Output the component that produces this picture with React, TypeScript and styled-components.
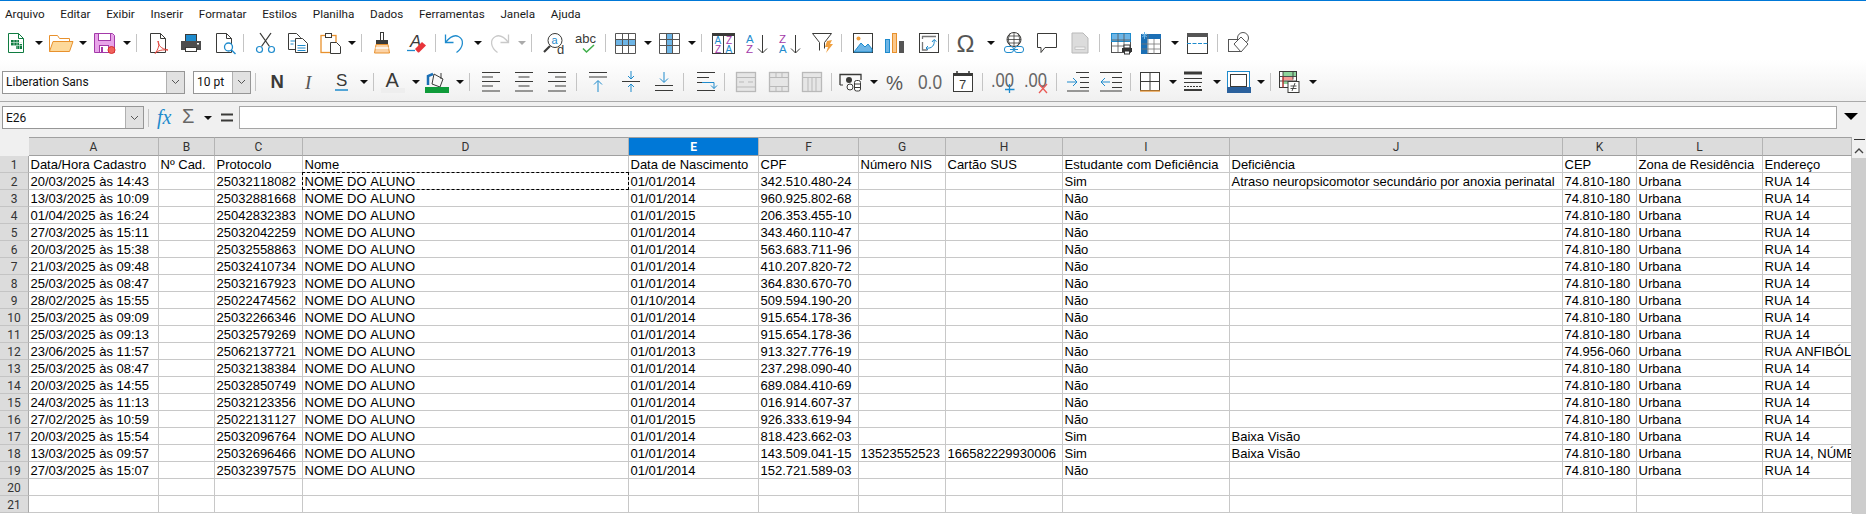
import React from "react";
import styled, { createGlobalStyle } from "styled-components";

const GlobalStyle = createGlobalStyle`
  html, body { margin: 0; padding: 0; background: #f0f0f0; }
  body { font-family: "Roboto", "Liberation Sans", sans-serif; }
`;

const D = "#3a3a38";
const B = "#1e8bcd";
const G = "#b9b9b9";

const Page = styled.div`
  width: 1866px;
  height: 514px;
  overflow: hidden;
  display: flex;
  flex-direction: column;
  border-top: 1px solid #0078d7;
  box-sizing: border-box;
`;

const MenuBar = styled.div`
  height: 25px;
  flex: none;
  display: flex;
  align-items: center;
  gap: 15.7px;
  padding-left: 5px;
  background: #fff;
  font-size: 11.7px;
  color: #1a1a1a;
`;

const Toolbars = styled.div`
  flex: none;
  height: 75px;
  background: linear-gradient(#fff 45%, #f0f0f0);
  border-bottom: 1px solid #a9a9a9;
`;

const Toolbar = styled.div<{ $top?: number }>`
  display: flex;
  align-items: center;
  height: 34px;
  padding-left: 5px;
  margin-top: ${(p) => p.$top ?? 0}px;
`;

const Ico = styled.svg<{ $g?: number }>`
  flex: none;
  width: 22px;
  height: 22px;
  overflow: visible;
  margin-left: ${(p) => p.$g ?? 0}px;
`;

const Drop = styled.span<{ $g?: number; $off?: boolean }>`
  flex: none;
  width: 0;
  height: 0;
  margin-left: ${(p) => p.$g ?? 0}px;
  border-left: 4px solid transparent;
  border-right: 4px solid transparent;
  border-top: 4px solid ${(p) => (p.$off ? "#aaa" : "#111")};
`;

const Sep = styled.span<{ $g?: number }>`
  flex: none;
  width: 1px;
  height: 18px;
  background: #c4c4c4;
  margin-left: ${(p) => p.$g ?? 0}px;
`;

const Combo = styled.div<{ $w: number; $g?: number }>`
  flex: none;
  box-sizing: border-box;
  width: ${(p) => p.$w}px;
  height: 23px;
  margin-left: ${(p) => p.$g ?? 0}px;
  display: flex;
  border: 1px solid #969696;
  background: #fff;
  font-size: 12px;
  color: #111;
`;

const ComboText = styled.div`
  flex: 1;
  display: flex;
  align-items: center;
  padding-left: 3px;
`;

const ComboButton = styled.div`
  flex: none;
  width: 17px;
  display: flex;
  align-items: center;
  justify-content: center;
  background: #e1e1e1;
  border-left: 1px solid #b0b0b0;
`;

const Chevron = () => (
  <svg width="9" height="6" viewBox="0 0 9 6">
    <path d="M1 1l3.5 3.5L8 1" fill="none" stroke="#555" />
  </svg>
);

const FormulaBar = styled.div`
  flex: none;
  height: 35px;
  box-sizing: border-box;
  padding: 4px 0 0 2px;
  display: flex;
  align-items: flex-start;
  background: #f0f0f0;
`;

const FormulaTools = styled.div`
  height: 23px;
  display: flex;
  align-items: center;
`;

const FormulaInput = styled.div`
  flex: none;
  box-sizing: border-box;
  width: 1598px;
  height: 23px;
  margin-left: 1px;
  background: #fff;
  border: 1px solid #a5a5a5;
`;

const BigDrop = styled.span`
  flex: none;
  width: 0;
  height: 0;
  margin: 7px 0 0 7px;
  border-left: 7px solid transparent;
  border-right: 7px solid transparent;
  border-top: 7px solid #000;
`;

const SheetArea = styled.div`
  flex: 1;
  min-height: 0;
  display: flex;
`;

const Sheet = styled.div`
  flex: none;
  width: 1852px;
  display: grid;
  grid-template-columns: 29px 130px 56px 88px 326px 130px 100px 87px 117px 167px 333px 74px 126px 89px;
  grid-auto-rows: 17px;
  grid-template-rows: 19px;
  background: #fff;
  align-content: start;
`;

const Corner = styled.div`
  background: #f0f0f0;
`;

const ColHead = styled.div<{ $on?: boolean }>`
  box-sizing: border-box;
  display: flex;
  align-items: center;
  justify-content: center;
  font-size: 12px;
  font-weight: ${(p) => (p.$on ? 700 : 400)};
  color: ${(p) => (p.$on ? "#fff" : "#333")};
  background: ${(p) => (p.$on ? "#0078d7" : "#dcdcdc")};
  border-top: 1px solid #a0a0a0;
  border-bottom: 1px solid #a0a0a0;
  border-right: 1px solid #b4b4b4;
`;

const RowHead = styled.div`
  box-sizing: border-box;
  display: flex;
  align-items: center;
  justify-content: center;
  padding-top: 1px;
  font-size: 12px;
  color: #333;
  background: #dcdcdc;
  border-bottom: 1px solid #c4c4c4;
  border-right: 1px solid #a8a8a8;
`;

const Cell = styled.div<{ $copied?: boolean }>`
  box-sizing: border-box;
  position: relative;
  padding: 1px 0 0 1.5px;
  font: 13px/16px "Liberation Sans", Arial, sans-serif;
  font-kerning: none;
  color: #000;
  white-space: nowrap;
  overflow: ${(p) => (p.$copied ? "visible" : "hidden")};
  border-bottom: 1px solid #c8c8c8;
  border-right: 1px solid #c8c8c8;
  ${(p) =>
    p.$copied
      ? `&::after {
    content: "";
    position: absolute;
    inset: -1px;
    border: 1px dashed #000;
  }`
      : ""}
`;

const Scrollbar = styled.div`
  flex: 1;
  display: flex;
  flex-direction: column;
  background: #cdcdcd;
`;

const ScrollUp = styled.div`
  height: 21px;
  background: #f0f0f0;
  display: flex;
  flex-direction: column;
  align-items: center;
`;

const SplitLine = styled.div`
  width: 11px;
  height: 1px;
  margin: 2px 0 8px;
  background: #333;
`;

type IconProps = { g?: number };
const ico = (body: React.ReactNode) =>
  function Icon({ g }: IconProps) {
    return (
      <Ico $g={g} viewBox="0 0 22 22" fill="none">
        {body}
      </Ico>
    );
  };

const Txt = styled.text<{ $i?: boolean; $b?: boolean; $serif?: boolean }>`
  font-family: ${(p) => (p.$serif ? '"Liberation Serif"' : '"Liberation Sans"')}, serif;
  font-style: ${(p) => (p.$i ? "italic" : "normal")};
  font-weight: ${(p) => (p.$b ? 700 : 400)};
`;

const grid = (stroke: string, cols: number[], rows: number[]) => (
  <path
    d={[...cols.map((x) => `M${x} 1.5V21.5`), ...rows.map((y) => `M.5 ${y}H20.5`)].join("")}
    stroke={stroke}
  />
);

const CalcNew = ico(
  <>
    <path d="M3.5 1.5h10l5 5v14h-15z" fill="#fff" stroke="#107c41" />
    <path d="M13.5 1.5v5h5" stroke="#107c41" />
    <rect x="6" y="8" width="8" height="6" fill="#107c41" />
    <rect x="11" y="12" width="6" height="5" fill="#107c41" />
    <path d="M6 10.5h11M6 13.5h11M9 8v6M12 8v9M14.5 12v5" stroke="#cfe8d8" strokeWidth=".7" />
  </>
);
const Folder = ico(
  <>
    <path d="M-.5 19.5v-16h8l2 3h10v3" fill="#fff" stroke="#e8912d" />
    <path d="M-.5 19.5L3 9.5h20l-3.5 10z" fill="#fdd99b" stroke="#e8912d" />
  </>
);
const Save = ico(
  <>
    <path d="M.5 1.5h18l2 2v17H.5z" fill="#e8a4e9" stroke="#a33aa9" />
    <rect x="4.5" y="1.5" width="12" height="7" fill="#fff" stroke="#a33aa9" />
    <rect x="5.5" y="13.5" width="9" height="7" fill="#fff" stroke="#a33aa9" />
    <rect x="7" y="15" width="2" height="5" fill="#a33aa9" />
    <circle cx="17.5" cy="18" r="3.5" fill="#f0625d" stroke="#d9302e" />
  </>
);
const Pdf = ico(
  <>
    <path d="M2.5 1.5h10l5 5v14h-15z" fill="#fff" stroke={D} />
    <path d="M12.5 1.5v5h5" stroke={D} />
    <path d="M10 9c0 4 3 8 10 9-5-.4-10 0-13 3.500 3-4 5-8.500 3-12.500z" stroke="#e2453c" />
  </>
);
const Printer = ico(
  <>
    <rect x="5.500" y="2.500" width="11" height="7" fill={B} stroke={D} />
    <path d="M1 9h20v9h-4v-3H5v3H1z" fill="#4d4d4d" />
    <rect x="5.500" y="15.500" width="11" height="4" fill="#fff" stroke={D} />
    <rect x="17" y="11" width="2" height="1.500" fill="#fff" />
  </>
);
const Preview = ico(
  <>
    <path d="M1.500 1.500h10l5 5v14h-15z" fill="#fff" stroke={D} />
    <path d="M11.500 1.500v5h5" stroke={D} />
    <circle cx="13.500" cy="15" r="4" fill="#fff" stroke={B} strokeWidth="1.300" />
    <path d="M16.500 18l4 4" stroke={B} strokeWidth="1.500" />
  </>
);
const Cut = ico(
  <>
    <path d="M5 1l9.500 13.500M16 1L6.500 14.500" stroke={D} strokeWidth="1.300" />
    <circle cx="4.500" cy="17.500" r="3" stroke={B} strokeWidth="1.200" />
    <circle cx="16.500" cy="17.500" r="3" stroke={B} strokeWidth="1.200" />
  </>
);
const Copy = ico(
  <>
    <path d="M1.500 1.500h8l4 4v12h-12z" fill="#fff" stroke={D} />
    <path d="M3.500 9h5M3.500 12h3" stroke={B} />
    <path d="M8.500 6.500h7l5 5v9h-12z" fill="#fff" stroke={D} />
    <path d="M10.500 13.500h8M10.500 16h8M10.500 18.500h8" stroke={B} />
  </>
);
const Paste = ico(
  <>
    <rect x="1" y="3.500" width="15" height="17" fill="#fff" stroke="#e8912d" strokeWidth="1.300" />
    <rect x="5.500" y="1.500" width="6" height="4" fill="#fff" stroke={D} />
    <path d="M10.500 10.500h6l4 4v7h-10z" fill="#fff" stroke={D} />
  </>
);
const Brush = ico(
  <>
    <rect x="9.500" y="0.500" width="3" height="8" fill="#fff" stroke={D} />
    <rect x="5" y="8" width="12" height="4" fill={D} />
    <path d="M5 12.500h12l1.500 8.500h-15z" fill="#fbd2a5" stroke="#e8912d" />
    <path d="M4.500 16h13" stroke="#fff" strokeWidth="1.500" />
  </>
);
const ClearFmt = ico(
  <>
    <Txt x="5" y="15" fontSize="17" $i fill={D}>A</Txt>
    <path d="M2 18.500h8" stroke={B} strokeWidth="1.300" />
    <path d="M10 17l7-7 4 3.500-7 7h-1z" fill="#e8343a" />
  </>
);
const Undo = ico(
  <>
    <path d="M1.500 2.500v8h8" stroke={B} strokeWidth="1.300" />
    <path d="M1.500 10.500c4-5 9-8 13-6 6 3 5 11-2 16" stroke={B} strokeWidth="1.300" />
  </>
);
const Redo = ico(
  <>
    <path d="M20.500 2.500v8h-8" stroke="#c9c9c9" strokeWidth="1.300" />
    <path d="M20.500 10.500c-4-5-9-8-13-6-6 3-5 11 2 16" stroke="#c9c9c9" strokeWidth="1.300" />
  </>
);
const Find = ico(
  <>
    <circle cx="12" cy="8.500" r="7" fill="#fff" stroke={D} />
    <path d="M7 14l-6 6" stroke={D} strokeWidth="2.200" />
    <Txt x="8.500" y="12" fontSize="11" fill={B}>a</Txt>
    <Txt x="14" y="22" fontSize="13" fill={D}>d</Txt>
  </>
);
const Spell = ico(
  <>
    <Txt x="0" y="10.500" fontSize="13" fill={D}>abc</Txt>
    <path d="M8 16.500l3.500 3.500 7.500-7" stroke="#3fae49" strokeWidth="1.500" />
  </>
);
const TableRow = ico(
  <>
    <rect x=".5" y="1.500" width="20" height="20" fill="#fff" />
    <rect x=".5" y="7.500" width="20" height="6" fill="#6db5e6" />
    {grid("#555", [.5, 7.5, 13.5, 20.5], [1.5, 7.5, 13.5, 21.5])}
  </>
);
const TableCol = ico(
  <>
    <rect x=".5" y="1.500" width="20" height="20" fill="#fff" />
    <rect x="7.500" y="1.500" width="6" height="20" fill="#6db5e6" />
    {grid("#555", [.5, 7.5, 13.5, 20.5], [1.5, 7.5, 13.5, 21.5])}
  </>
);
const Sort = ico(
  <>
    <rect x=".5" y="1.500" width="22" height="20" fill="#fff" stroke={D} />
    <rect x="0" y="1" width="23" height="3" fill={D} />
    <path d="M11.500 4v17" stroke={D} />
    <Txt x="2.500" y="12" fontSize="10" fill={B}>A</Txt>
    <Txt x="3" y="20.500" fontSize="10" fill="#a33aa9">Z</Txt>
    <Txt x="14" y="12" fontSize="10" fill="#a33aa9">Z</Txt>
    <Txt x="13.500" y="20.500" fontSize="10" fill={B}>A</Txt>
  </>
);
const SortAsc = ico(
  <>
    <Txt x="0" y="11" fontSize="11.500" fill={B}>A</Txt>
    <Txt x="0" y="21" fontSize="11.500" fill="#a33aa9">Z</Txt>
    <path d="M16.500 3v18M12 16.500l4.500 4.500 4.500-4.500" stroke={D} />
  </>
);
const SortDesc = ico(
  <>
    <Txt x="0" y="11" fontSize="11.500" fill="#a33aa9">Z</Txt>
    <Txt x="0" y="21" fontSize="11.500" fill={B}>A</Txt>
    <path d="M16.500 3v18M12 16.500l4.500 4.500 4.500-4.500" stroke={D} />
  </>
);
const Filter = ico(
  <>
    <path d="M.5 1.500h19l-7 9v6M.5 1.500l7 9v8" fill="#fff" stroke={D} />
    <path d="M15 9l5-1-2 4h3l-7 9 2-6h-3z" fill="#f0a040" />
  </>
);
const Picture = ico(
  <>
    <rect x="1.500" y="1.500" width="19" height="19" fill="#fff" stroke={D} />
    <circle cx="6.500" cy="6.500" r="2" fill="#f0a040" />
    <path d="M2 20l7-9 4 4 3-3 4 5v3z" fill="#6db5e6" stroke={B} />
  </>
);
const Chart = ico(
  <>
    <rect x="1.500" y="7.500" width="4" height="13" fill="#6db5e6" stroke={B} />
    <rect x="8.500" y="1.500" width="4" height="19" fill="#fbc88c" stroke="#e8912d" />
    <rect x="15.500" y="9.500" width="4" height="11" fill="#555" stroke="#555" />
  </>
);
const Pivot = ico(
  <>
    <rect x="1.500" y="1.500" width="19" height="19" fill="#fff" stroke={D} />
    <path d="M4 4.500h14M4.500 4v3M4.500 10v8h5" stroke="#777" strokeWidth="1.300" />
    <path d="M8 16c6 1 9-3 8-8M14 10l2-2.500 2.500 2M10 14l-2 2 2 2" stroke={B} />
  </>
);
const Omega = ico(
  <Txt x="-.5" y="19.500" fontSize="24" fill="#555">Ω</Txt>
);
const Link = ico(
  <>
    <circle cx="11" cy="7.500" r="7" fill="#fff" stroke={D} />
    <path d="M4 7.500h14M11 .5v14M7 1.500c-2 4-2 8 0 12M15 1.500c2 4 2 8 0 12M5 4h12M5 11h12" stroke={D} strokeWidth=".8" />
    <rect x="1.500" y="14.500" width="9" height="6" rx="2.500" fill="#fff" stroke={B} />
    <rect x="11.500" y="14.500" width="9" height="6" rx="2.500" fill="#fff" stroke={B} />
    <path d="M7 17.500h8" stroke={B} />
  </>
);
const Comment = ico(
  <path d="M1.500 1.500h19v14H9l-4 5v-5H1.500z" fill="#fff" stroke={D} />
);
const HeadFoot = ico(
  <>
    <path d="M3 1h11l5 5v15H3z" fill="#dcdcdc" stroke={G} />
    <rect x="6" y="15" width="10" height="2.500" fill="#f2f2f2" stroke={G} strokeWidth=".7" />
  </>
);
const PrintArea = ico(
  <>
    <rect x=".5" y="1.500" width="19" height="19" fill="#fff" stroke="#555" />
    <rect x=".5" y="1.500" width="19" height="8" fill="#6db5e6" stroke={B} />
    <path d="M.5 8h19M.5 14h19M7 1.500v19M13 1.500v19" stroke="#555" strokeWidth=".8" />
    <rect x="11" y="16" width="10" height="4" fill="#333" />
    <rect x="13" y="13" width="6" height="3" fill="#fff" stroke="#333" />
    <rect x="13.500" y="19" width="5" height="3" fill="#fff" stroke="#333" />
  </>
);
const Freeze = ico(
  <>
    <rect x=".5" y="2.500" width="19" height="19" fill="#fff" stroke="#555" />
    <rect x="0" y="2" width="20" height="5" fill="#1b6fb5" />
    <rect x="0" y="2" width="6.500" height="20" fill="#1b6fb5" />
    <path d="M3.500 0v7M1 2l5 3M6 2L1 5" stroke="#6db5e6" />
    <path d="M.5 12h19M.5 17h19M7 2v20M13 7v15" stroke="#777" strokeWidth=".8" />
  </>
);
const Split = ico(
  <>
    <rect x=".5" y="1.500" width="20" height="20" fill="#fff" stroke={D} />
    <rect x="0" y="1" width="21" height="4" fill="#555" />
    <path d="M0 11.500h21" stroke={B} strokeDasharray="4 1.500" />
  </>
);
const Shapes = ico(
  <>
    <circle cx="15" cy="6" r="5.500" fill="#fff" stroke="#555" />
    <rect x=".5" y="7.500" width="12" height="12" fill="#fff" stroke="#555" />
    <path d="M13 5l7 7-7 8-7-8z" fill="#fff" stroke="#555" />
  </>
);

const Bold = ico(<Txt x="4.500" y="17" fontSize="18.500" $b fill={D}>N</Txt>);
const Italic = ico(<Txt x="6" y="17.500" fontSize="19" $i $serif fill="#555">I</Txt>);
const Under = ico(
  <>
    <Txt x="5" y="15" fontSize="17" fill={D}>S</Txt>
    <path d="M4 19h13" stroke={B} strokeWidth="1.500" />
  </>
);
const FontColor = ico(
  <>
    <Txt x="3.500" y="15.500" fontSize="20" fill={D}>A</Txt>
    <rect x="-1" y="17" width="24" height="5" fill="#eeeeee" />
  </>
);
const CellBg = ico(
  <>
    <path d="M8 3l9 5-3 8-8-3z" fill="#f8f8f8" stroke={D} />
    <path d="M2 14V5l5-2" stroke="#1b6fb5" strokeWidth="2.500" />
    <path d="M15 2v6" stroke={D} />
    <rect x="-1" y="16" width="24" height="6" fill="#0f9b3a" />
  </>
);
const lines = (d: string) => ico(<path d={d} stroke={D} strokeWidth="1.200" />);
const AlignL = lines("M2 1.500h18M2 6h11M2 10.500h18M2 15h11M2 20h18");
const AlignC = lines("M2 1.500h18M5.500 6h11M2 10.500h18M5.500 15h11M2 20h18");
const AlignR = lines("M2 1.500h18M9 6h11M2 10.500h18M9 15h11M2 20h18");
const VTop = ico(
  <>
    <path d="M2 1.500h18M2 6h18" stroke={D} />
    <path d="M11 21V10M7 13.500l4-4 4 4" stroke={B} />
  </>
);
const VMid = ico(
  <>
    <path d="M2 10.500h18" stroke={D} />
    <path d="M11 0v8M8 5l3 3 3-3M11 21v-8M8 16l3-3 3 3" stroke={B} />
  </>
);
const VBot = ico(
  <>
    <path d="M2 14.500h18M2 19.500h18" stroke={D} />
    <path d="M11 1v10M7 7.500l4 4 4-4" stroke={B} />
  </>
);
const Wrap = ico(
  <>
    <path d="M2 1.500h18M2 6.500h12M2 11.500h7M2 19.500h18" stroke={D} />
    <path d="M7 11.500h12v6M16 14.500l3 3 3-3" stroke={B} />
  </>
);
const mergeBase = (inner: string) =>
  ico(
    <>
      <rect x="1.500" y="1.500" width="19" height="19" fill="#e6e6e6" stroke={G} strokeWidth="1.300" />
      <path d={inner} stroke={G} />
    </>
  );
const Merge = mergeBase("M1.500 6.500h19M1.500 16h19M4 11h5M13 11h5");
const MergeCenter = mergeBase("M1.500 6.500h19M1.500 15.500h19M8 15.500v5M14 15.500v5M8 1.500v5M14 1.500v5");
const Unmerge = mergeBase("M1.500 6.500h19M7 6.500v14M11 6.500v14M15 6.500v14");
const Currency = ico(
  <>
    <path d="M0 14V3.500h21V9" stroke={D} strokeWidth="1.300" />
    <path d="M0 14h3" stroke={D} />
    <circle cx="9" cy="9" r="3" fill={D} />
    <ellipse cx="10" cy="16" rx="3" ry="3" fill="#fff" stroke={D} />
    <rect x="14.500" y="9.500" width="6" height="10.500" rx="2" fill="#fff" stroke={D} />
    <path d="M14.500 13h6M14.500 16.500h6" stroke={D} />
  </>
);
const Percent = ico(
  <Txt x="0" y="19" fontSize="21" textLength="17" lengthAdjust="spacingAndGlyphs" fill="#555">%</Txt>
);
const NumFmt = ico(
  <Txt x="-1" y="18" fontSize="21" textLength="24" lengthAdjust="spacingAndGlyphs" fill="#666">0.0</Txt>
);
const DateIco = ico(
  <>
    <rect x="1.500" y="2.500" width="19" height="18" fill="#fff" stroke={D} />
    <rect x="1" y="2" width="20" height="3" fill={D} />
    <path d="M5 0v3M17 0v3" stroke={D} strokeWidth="1.500" />
    <Txt x="7" y="18" fontSize="13" fill={D}>7</Txt>
  </>
);
const AddDec = ico(
  <>
    <Txt x="-1" y="16" fontSize="20" textLength="23" lengthAdjust="spacingAndGlyphs" fill="#666">.00</Txt>
    <path d="M17.500 13v9M13 18.500h9.500" stroke={B} strokeWidth="1.300" />
  </>
);
const DelDec = ico(
  <>
    <Txt x="-1" y="16" fontSize="20" textLength="23" lengthAdjust="spacingAndGlyphs" fill="#666">.00</Txt>
    <path d="M14 13l8 9M22 13l-8 9" stroke="#ea5a55" strokeWidth="1.300" />
  </>
);
const Indent = ico(
  <>
    <path d="M9 1.500h13M13 6.500h9M13 11.500h9M13 16.500h9M0 20h22" stroke={D} />
    <path d="M0 11h9M6 7l4 4-4 4" stroke={B} />
  </>
);
const Outdent = ico(
  <>
    <path d="M0 1.500h22M12 6.500h10M12 11.500h10M12 16.500h10M0 20h22" stroke={D} />
    <path d="M10 11H1M5 7l-4 4 4 4" stroke={B} />
  </>
);
const Borders = ico(
  <>
    <rect x="1.500" y="1.500" width="19" height="18" fill="#fff" stroke={D} />
    <path d="M1.500 10.500h19M11 1.500v18" stroke={D} />
    <path d="M1 20h20" stroke="#e8912d" strokeWidth="1.300" />
  </>
);
const BorderStyle = ico(
  <>
    <path d="M1 2h18" stroke={D} strokeWidth="3" />
    <path d="M1 7.500h18M1 11.500h18" stroke={D} />
    <path d="M1 15.500h18" stroke={D} strokeDasharray="2 1" />
    <path d="M1 19h18" stroke={D} strokeWidth="2" />
  </>
);
const BorderColor = ico(
  <>
    <rect x="-.5" y=".5" width="22" height="16" fill="#fff" stroke={B} />
    <rect x="2.500" y="3.500" width="16" height="12" fill="#fff" stroke={D} />
    <rect x="-1" y="16" width="24" height="6" fill="#2b619d" />
  </>
);
const CondFmt = ico(
  <>
    <rect x=".5" y=".5" width="17" height="16" fill="#fff" stroke={D} />
    <rect x="4" y="1" width="13" height="4" fill="#8ed49b" />
    <rect x="4" y="6" width="10" height="3.500" fill="#f59c96" />
    <rect x="4" y="10" width="6" height="3" fill="#8ed49b" />
    <path d="M.5 5.500h17M.5 10h17M4 .5v16M14 .5v8" stroke={D} strokeWidth=".9" />
    <path d="M4 5.500v11" stroke="#e02a2a" />
    <rect x="9" y="10.500" width="11" height="11" fill="#fff" stroke={D} />
    <path d="M11.500 15h6M11.500 17.500h6M13 20l3-8" stroke={D} strokeWidth=".9" />
  </>
);
const Fx = ico(
  <Txt x="2" y="17" fontSize="20" $i $serif fill={B}>fx</Txt>
);
const Sigma = ico(
  <Txt x="4" y="16" fontSize="20" fill="#666">Σ</Txt>
);
const Equal = ico(<path d="M5 7.500h12M5 13.500h12" stroke={D} strokeWidth="2" />);

const menus = [
  "Arquivo", "Editar", "Exibir", "Inserir", "Formatar", "Estilos",
  "Planilha", "Dados", "Ferramentas", "Janela", "Ajuda",
];

const columns = ["A", "B", "C", "D", "E", "F", "G", "H", "I", "J", "K", "L", ""];

const headers = [
  "Data/Hora Cadastro", "Nº Cad.", "Protocolo", "Nome", "Data de Nascimento", "CPF", "Número NIS",
  "Cartão SUS", "Estudante com Deficiência", "Deficiência", "CEP", "Zona de Residência", "Endereço",
];

type Rec = {
  at: string; prot: string; born: string; cpf: string;
  nis?: string; sus?: string; est?: string; def?: string; cep?: string; addr?: string;
};

const records: Rec[] = [
  { at: "20/03/2025 às 14:43", prot: "25032118082", born: "01/01/2014", cpf: "342.510.480-24", est: "Sim", def: "Atraso neuropsicomotor secundário por anoxia perinatal" },
  { at: "13/03/2025 às 10:09", prot: "25032881668", born: "01/01/2014", cpf: "960.925.802-68" },
  { at: "01/04/2025 às 16:24", prot: "25042832383", born: "01/01/2015", cpf: "206.353.455-10" },
  { at: "27/03/2025 às 15:11", prot: "25032042259", born: "01/01/2014", cpf: "343.460.110-47" },
  { at: "20/03/2025 às 15:38", prot: "25032558863", born: "01/01/2014", cpf: "563.683.711-96" },
  { at: "21/03/2025 às 09:48", prot: "25032410734", born: "01/01/2014", cpf: "410.207.820-72" },
  { at: "25/03/2025 às 08:47", prot: "25032167923", born: "01/01/2014", cpf: "364.830.670-70" },
  { at: "28/02/2025 às 15:55", prot: "25022474562", born: "01/10/2014", cpf: "509.594.190-20" },
  { at: "25/03/2025 às 09:09", prot: "25032266346", born: "01/01/2014", cpf: "915.654.178-36" },
  { at: "25/03/2025 às 09:13", prot: "25032579269", born: "01/01/2014", cpf: "915.654.178-36" },
  { at: "23/06/2025 às 11:57", prot: "25062137721", born: "01/01/2013", cpf: "913.327.776-19", cep: "74.956-060", addr: "RUA ANFIBÓLIO" },
  { at: "25/03/2025 às 08:47", prot: "25032138384", born: "01/01/2014", cpf: "237.298.090-40" },
  { at: "20/03/2025 às 14:55", prot: "25032850749", born: "01/01/2014", cpf: "689.084.410-69" },
  { at: "24/03/2025 às 11:13", prot: "25032123356", born: "01/01/2014", cpf: "016.914.607-37" },
  { at: "27/02/2025 às 10:59", prot: "25022131127", born: "01/01/2015", cpf: "926.333.619-94" },
  { at: "20/03/2025 às 15:54", prot: "25032096764", born: "01/01/2014", cpf: "818.423.662-03", est: "Sim", def: "Baixa Visão" },
  { at: "13/03/2025 às 09:57", prot: "25032696466", born: "01/01/2014", cpf: "143.509.041-15", nis: "13523552523", sus: "166582229930006", est: "Sim", def: "Baixa Visão", addr: "RUA 14, NÚMERO" },
  { at: "27/03/2025 às 15:07", prot: "25032397575", born: "01/01/2014", cpf: "152.721.589-03" },
];

const recordCells = (r: Rec) => [
  r.at, "", r.prot, "NOME DO ALUNO", r.born, r.cpf, r.nis ?? "", r.sus ?? "", r.est ?? "Não",
  r.def ?? "", r.cep ?? "74.810-180", "Urbana", r.addr ?? "RUA 14",
];

export default function App() {
  return (
    <Page>
      <GlobalStyle />
      <MenuBar>
        {menus.map((m) => (
          <span key={m}>{m}</span>
        ))}
      </MenuBar>
      <Toolbars>
        <Toolbar>
          <CalcNew /><Drop $g={8} /><Folder g={7} /><Drop $g={7} /><Save g={7} /><Drop $g={7} /><Sep $g={5} />
          <Pdf g={11} /><Printer g={10} /><Preview g={13} /><Sep $g={6} />
          <Cut g={11} /><Copy g={10} /><Paste g={11} /><Drop $g={6} /><Sep $g={5} />
          <Brush g={9} /><ClearFmt g={12} /><Sep $g={8} />
          <Undo g={8} /><Drop $g={8} /><Redo g={6} /><Drop $g={8} $off /><Sep $g={5} />
          <Find g={11} /><Spell g={10} /><Sep $g={8} />
          <TableRow g={9} /><Drop $g={7} /><TableCol g={7} /><Drop $g={7} /><Sep $g={5} />
          <Sort g={10} /><SortAsc g={12} /><SortDesc g={11} /><Filter g={11} /><Sep $g={7} />
          <Picture g={10} /><Chart g={10} /><Pivot g={12} /><Sep $g={8} />
          <Omega g={8} /><Drop $g={8} /><Link g={8} /><Comment g={11} /><HeadFoot g={11} /><Sep $g={8} />
          <PrintArea g={11} /><Freeze g={8} /><Drop $g={8} /><Split g={8} /><Sep $g={8} /><Shapes g={10} />
        </Toolbar>
        <Toolbar $top={5}>
          <Combo $w={183} $g={-3}>
            <ComboText>Liberation Sans</ComboText>
            <ComboButton><Chevron /></ComboButton>
          </Combo>
          <Combo $w={58} $g={8}>
            <ComboText>10 pt</ComboText>
            <ComboButton><Chevron /></ComboButton>
          </Combo>
          <Sep $g={4} />
          <Bold g={10} /><Italic g={11} /><Under g={10} /><Drop $g={7} /><Sep $g={5} />
          <FontColor g={8} /><Drop $g={8} /><CellBg g={6} /><Drop $g={8} /><Sep $g={5} />
          <AlignL g={10} /><AlignC g={11} /><AlignR g={11} /><Sep $g={8} />
          <VTop g={10} /><VMid g={11} /><VBot g={11} /><Sep $g={8} />
          <Wrap g={11} /><Sep $g={7} />
          <Merge g={10} /><MergeCenter g={11} /><Unmerge g={11} /><Sep $g={8} />
          <Currency g={8} /><Drop $g={8} /><Percent g={8} /><NumFmt g={11} /><DateIco g={11} /><Sep $g={8} />
          <AddDec g={9} /><DelDec g={11} /><Sep $g={9} />
          <Indent g={10} /><Outdent g={11} /><Sep $g={8} />
          <Borders g={8} /><Drop $g={8} /><BorderStyle g={6} /><Drop $g={8} /><BorderColor g={7} /><Drop $g={7} /><Sep $g={5} />
          <CondFmt g={8} /><Drop $g={8} />
        </Toolbar>
      </Toolbars>
      <FormulaBar>
        <Combo $w={142}>
          <ComboText>E26</ComboText>
          <ComboButton><Chevron /></ComboButton>
        </Combo>
        <FormulaTools>
          <Sep $g={4} />
          <Fx g={6} /><Sigma g={1} /><Drop $g={4} /><Equal g={4} />
        </FormulaTools>
        <FormulaInput />
        <BigDrop />
      </FormulaBar>
      <SheetArea>
        <Sheet>
          <Corner />
          {columns.map((c, i) => (
            <ColHead key={i} $on={c === "E"}>{c}</ColHead>
          ))}
          <RowHead>1</RowHead>
          {headers.map((h) => (
            <Cell key={h}>{h}</Cell>
          ))}
          {records.map((r, i) => (
            <React.Fragment key={r.prot}>
              <RowHead>{i + 2}</RowHead>
              {recordCells(r).map((v, j) => (
                <Cell key={j} $copied={i === 0 && j === 3}>{v}</Cell>
              ))}
            </React.Fragment>
          ))}
          {[20, 21].map((n) => (
            <React.Fragment key={n}>
              <RowHead>{n}</RowHead>
              {columns.map((_, j) => (
                <Cell key={j} />
              ))}
            </React.Fragment>
          ))}
        </Sheet>
        <Scrollbar>
          <ScrollUp>
            <SplitLine />
            <svg width="10" height="6" viewBox="0 0 10 6">
              <path d="M1 5l4-4 4 4" fill="none" stroke="#444" strokeWidth="1.400" />
            </svg>
          </ScrollUp>
        </Scrollbar>
      </SheetArea>
    </Page>
  );
}
